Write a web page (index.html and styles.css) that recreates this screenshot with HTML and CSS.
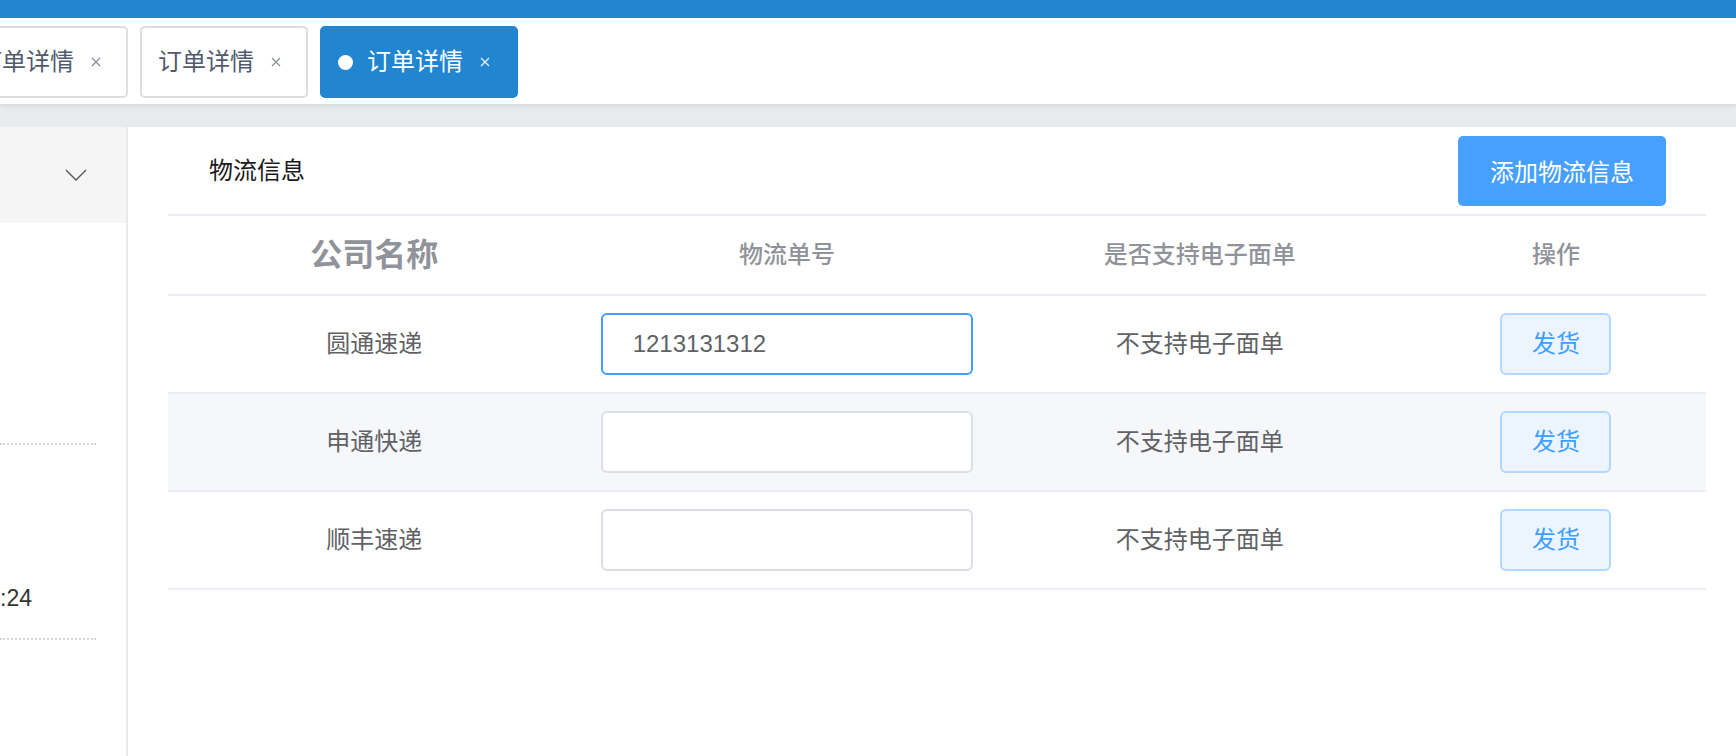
FILE: index.html
```html
<!DOCTYPE html>
<html lang="zh-CN">
<head>
<meta charset="utf-8">
<title>订单详情</title>
<link rel="stylesheet" href="styles.css">
</head>
<body>
<div class="topbar"></div>
<div class="tabbar">
  <div class="tabs">
    <div class="tab">
      <span class="tab-label">订单详情</span>
      <svg class="tab-close" viewBox="0 0 10 10"><path d="M1 1L9 9M9 1L1 9"/></svg>
    </div>
    <div class="tab">
      <span class="tab-label">订单详情</span>
      <svg class="tab-close" viewBox="0 0 10 10"><path d="M1 1L9 9M9 1L1 9"/></svg>
    </div>
    <div class="tab tab-active">
      <span class="tab-dot"></span>
      <span class="tab-label">订单详情</span>
      <svg class="tab-close" viewBox="0 0 10 10"><path d="M1 1L9 9M9 1L1 9"/></svg>
    </div>
  </div>
</div>
<div class="main">
  <aside class="side">
    <div class="side-head">
      <svg class="chevron" viewBox="0 0 22 12"><path d="M1 1L11 11L21 1"/></svg>
    </div>
    <div class="side-item side-item-a"></div>
    <div class="side-item side-item-b">
      <div class="side-time">:24</div>
    </div>
  </aside>
  <section class="panel">
    <div class="panel-head">
      <span class="panel-title">物流信息</span>
      <button class="btn-primary">添加物流信息</button>
    </div>
    <div class="table">
      <div class="tr th">
        <div class="cell th-company">公司名称</div>
        <div class="cell">物流单号</div>
        <div class="cell">是否支持电子面单</div>
        <div class="cell">操作</div>
      </div>
      <div class="tr">
        <div class="cell">圆通速递</div>
        <div class="cell"><input class="inp inp-focus" type="text" value="1213131312"></div>
        <div class="cell">不支持电子面单</div>
        <div class="cell"><button class="btn-ship">发货</button></div>
      </div>
      <div class="tr tr-stripe">
        <div class="cell">申通快递</div>
        <div class="cell"><input class="inp" type="text" value=""></div>
        <div class="cell">不支持电子面单</div>
        <div class="cell"><button class="btn-ship">发货</button></div>
      </div>
      <div class="tr">
        <div class="cell">顺丰速递</div>
        <div class="cell"><input class="inp" type="text" value=""></div>
        <div class="cell">不支持电子面单</div>
        <div class="cell"><button class="btn-ship">发货</button></div>
      </div>
    </div>
  </section>
</div>
</body>
</html>
```
FILE: styles.css
```css
* {
  box-sizing: border-box;
}

html, body {
  margin: 0;
  padding: 0;
  height: 100%;
  overflow: hidden;
}

body {
  font-family: "Liberation Sans", "Noto Sans CJK SC", sans-serif;
  font-size: 24px;
  color: #606266;
  background: #fff;
}

.topbar {
  height: 18px;
  background: #2285d0;
}

.tabbar {
  position: relative;
  z-index: 1;
  height: 86px;
  padding-top: 8px;
  background: #fff;
  box-shadow: 0 2px 4px rgba(0, 0, 0, 0.08);
  overflow: hidden;
}

.tabs {
  display: flex;
  gap: 12px;
  margin-left: -40px;
}

.tab {
  display: flex;
  align-items: center;
  flex: none;
  height: 72px;
  padding: 0 25px 0 16px;
  border: 2px solid #dcdee2;
  border-radius: 5px;
  color: #515a6e;
  background: #fff;
  white-space: nowrap;
}

.tab-label {
  line-height: 28px;
}

.tab-close {
  width: 10px;
  height: 10px;
  margin-left: 17px;
  fill: none;
  stroke: #8a8f99;
  stroke-width: 1.3;
}

.tab-active {
  background: #2285d0;
  border-color: #2285d0;
  color: #fff;
  padding-right: 26px;
}

.tab-active .tab-close {
  stroke: #e6f0fa;
}

.tab-dot {
  width: 15px;
  height: 15px;
  border-radius: 50%;
  background: #fff;
  margin-right: 14px;
}

.main {
  display: flex;
  gap: 2px;
  height: 652px;
  padding-top: 23px;
  background: #e8eaec;
}

.side {
  width: 126px;
  flex: none;
  background: #fff;
}

.side-head {
  height: 96px;
  background: #f5f5f5;
  display: flex;
  align-items: center;
  justify-content: flex-end;
  padding-right: 39px;
}

.chevron {
  width: 22px;
  height: 12px;
  fill: none;
  stroke: #555;
  stroke-width: 1.4;
}

.side-item {
  width: 96px;
  border-bottom: 2px dotted #d6d6d6;
}

.side-item-a {
  height: 222px;
}

.side-item-b {
  height: 195px;
  display: flex;
  flex-direction: column;
  justify-content: flex-end;
  padding-bottom: 28px;
}

.side-time {
  font-size: 23px;
  line-height: 24px;
  color: #333;
  white-space: nowrap;
}

.panel {
  flex: 1;
  background: #fff;
  padding: 0 30px 0 40px;
}

.panel-head {
  height: 89px;
  display: flex;
  align-items: center;
  justify-content: space-between;
  padding: 0 40px 0 41px;
  border-bottom: 2px solid #ebeef5;
}

.panel-title {
  color: #1a1a1a;
  line-height: 28px;
}

.btn-primary {
  width: 208px;
  height: 70px;
  border: none;
  border-radius: 5px;
  background: #47a0fc;
  color: #fff;
  font: inherit;
  padding: 0;
}

.tr {
  display: grid;
  grid-template-columns: 1fr 1fr 1fr 300px;
  height: 98px;
  border-bottom: 2px solid #ebeef5;
}

.th {
  height: 80px;
  color: #909399;
  font-weight: 500;
}

.th-company {
  font-size: 32px;
  font-weight: 700;
}

.tr-stripe {
  background: #f5f7fa;
}

.cell {
  display: flex;
  align-items: center;
  justify-content: center;
  padding: 0 20px;
  line-height: 28px;
}

.inp {
  width: 100%;
  height: 62px;
  border: 2px solid #dcdfe6;
  border-radius: 6px;
  background: #fff;
  padding: 0 30px;
  font: inherit;
  color: #606266;
  outline: none;
}

.inp-focus {
  border-color: #409eff;
}

.btn-ship {
  width: 111px;
  height: 62px;
  border: 2px solid #b3d8ff;
  border-radius: 6px;
  background: #ecf5ff;
  color: #409eff;
  font: inherit;
  padding: 0;
}
```
